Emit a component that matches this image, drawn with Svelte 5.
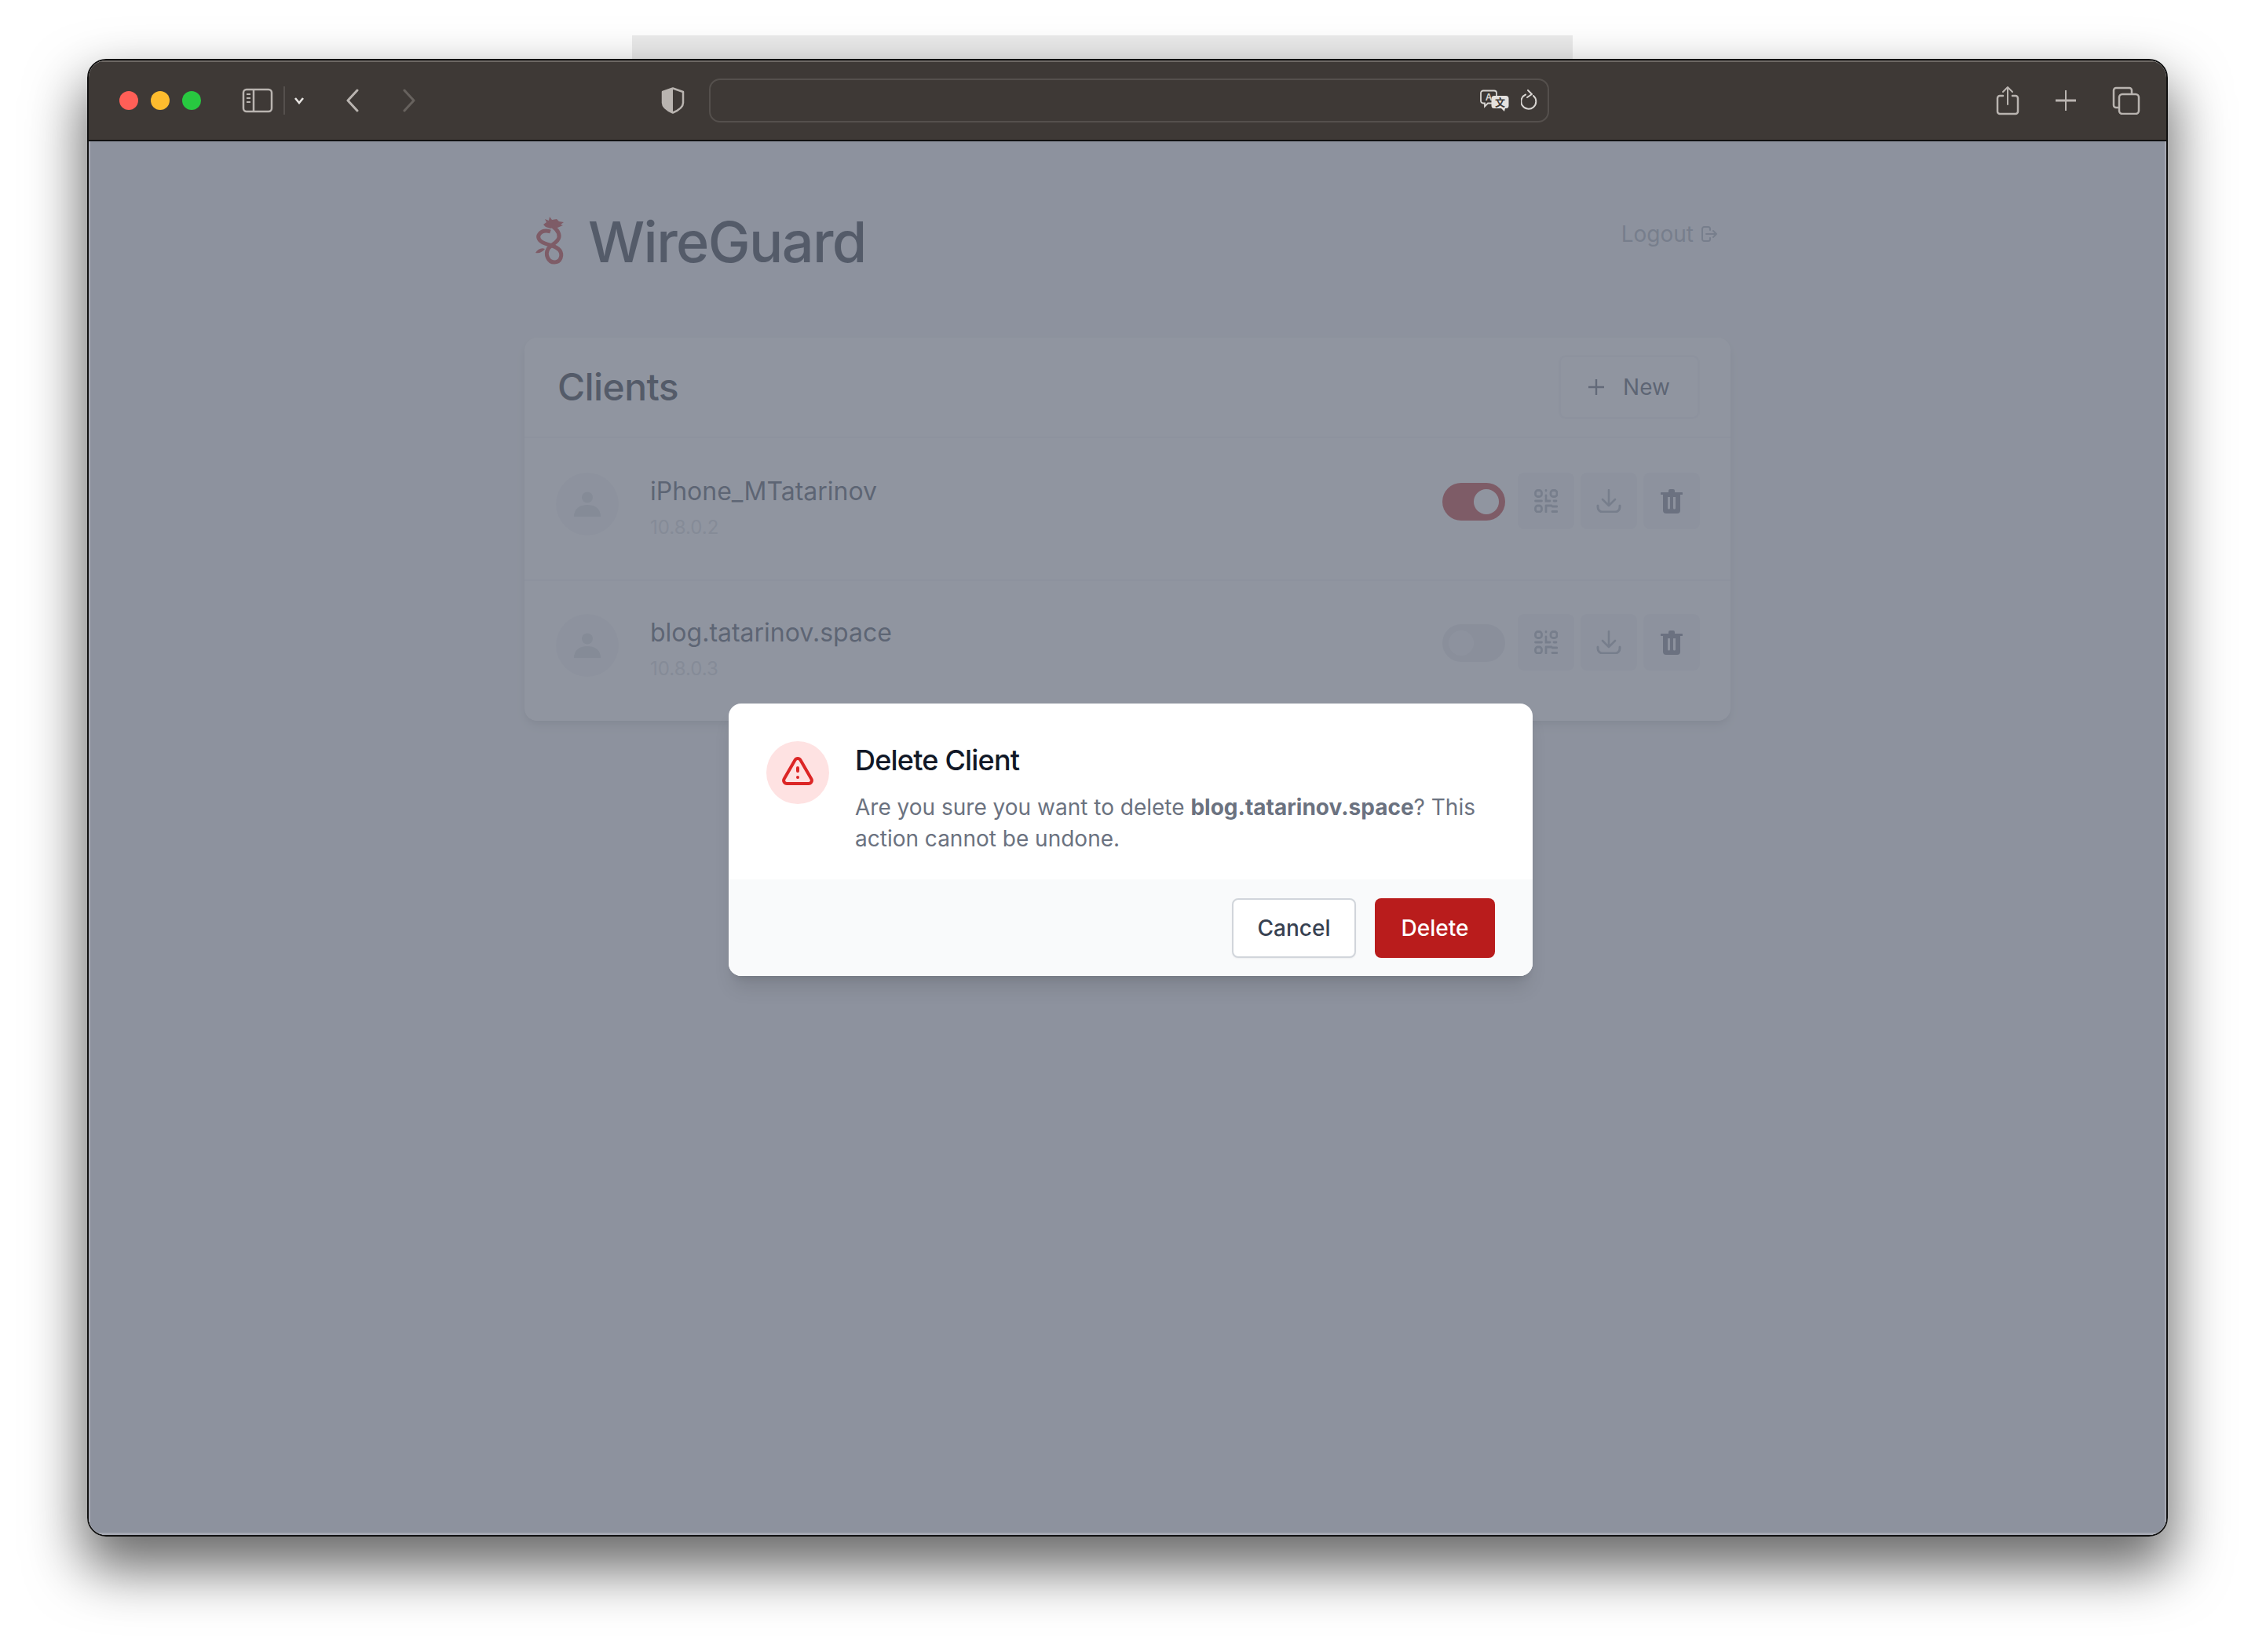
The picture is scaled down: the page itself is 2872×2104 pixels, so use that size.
<script>
  let clients = [
    { name: "iPhone_MTatarinov", ip: "10.8.0.2", enabled: true },
    { name: "blog.tatarinov.space", ip: "10.8.0.3", enabled: false }
  ];
</script>

<div class="scene">
  <div class="back-window"></div>
  <div class="window">
    <div class="toolbar">
      <span class="light red"></span>
      <span class="light yellow"></span>
      <span class="light green"></span>

      <svg class="sidebar-icon" width="40" height="32" viewBox="0 0 40 32" fill="none" stroke="#b9b4b0" stroke-width="2.5">
        <rect x="2" y="2" width="36" height="28" rx="4" />
        <path d="M15 2v28" />
        <path d="M6 8h5M6 13h5M6 18h5" stroke-width="2" />
      </svg>
      <span class="separator"></span>
      <svg class="small-chevron" width="14" height="10" viewBox="0 0 14 10" fill="none" stroke="#e8e5e2" stroke-width="2.6">
        <path d="M2 2l5 6 5-6" />
      </svg>
      <svg class="back" width="18" height="30" viewBox="0 0 18 30" fill="none" stroke="#b9b4b0" stroke-width="3" stroke-linecap="round" stroke-linejoin="round">
        <path d="M15 2L3 15l12 13" />
      </svg>
      <svg class="forward" width="18" height="30" viewBox="0 0 18 30" fill="none" stroke="#67625e" stroke-width="3" stroke-linecap="round" stroke-linejoin="round">
        <path d="M3 2l12 13L3 28" />
      </svg>
      <svg class="shield" width="30" height="34" viewBox="0 0 30 34">
        <path d="M15 1.5L28 6v14c0 6-7 10-13 12.500C9 30 2 26 2 20V6z" fill="none" stroke="#b9b4b0" stroke-width="2.500" stroke-linejoin="round" />
        <path d="M15 1.500L2 6v14c0 6 7 10 13 12.500z" fill="#b9b4b0" />
      </svg>

      <div class="address">
        <svg width="38" height="28" viewBox="0 0 38 28">
          <path d="M4 1.500h14a3 3 0 0 1 3 3v10a3 3 0 0 1-3 3h-8l-4 4v-4H4a3 3 0 0 1-3-3v-10a3 3 0 0 1 3-3z" fill="#3e3936" stroke="#d8d5d2" stroke-width="1.800" />
          <text x="11" y="14" class="glyph-a">A</text>
          <path d="M18 8h15a3.500 3.500 0 0 1 3.500 3.500v9a3.500 3.500 0 0 1-3.500 3.500h-1l-1 4-4-4h-9a3.500 3.500 0 0 1-3.500-3.500v-9A3.500 3.500 0 0 1 18 8z" fill="#e4e1de" />
          <text x="25.500" y="21" class="glyph-zh">文</text>
        </svg>
        <svg class="reload" width="22" height="28" viewBox="0 0 22 28" fill="none" stroke="#d8d5d2" stroke-width="2" stroke-linecap="round" stroke-linejoin="round">
          <path d="M6 6.500A9.500 9.500 0 1 0 16 8" />
          <path d="M9 1l5 5-6 4" />
        </svg>
      </div>

      <svg class="share" width="30" height="38" viewBox="0 0 30 38" fill="none" stroke="#b9b4b0" stroke-width="2.500" stroke-linecap="round" stroke-linejoin="round">
        <path d="M9 13H5a3 3 0 0 0-3 3v17a3 3 0 0 0 3 3h20a3 3 0 0 0 3-3V16a3 3 0 0 0-3-3h-4" />
        <path d="M15 24V2M9 8l6-6 6 6" stroke-width="2" />
      </svg>
      <svg class="plus" width="28" height="28" viewBox="0 0 28 28" fill="none" stroke="#b9b4b0">
        <path d="M14 1v26" stroke-width="2" />
        <path d="M1 14h26" stroke-width="3" />
      </svg>
      <svg class="tabs" width="36" height="36" viewBox="0 0 36 36" fill="none" stroke="#b9b4b0" stroke-width="2.500">
        <path d="M8 27H5a3 3 0 0 1-3-3V5a3 3 0 0 1 3-3h17a3 3 0 0 1 3 3v4" />
        <rect x="9" y="10" width="25" height="25" rx="4" />
      </svg>
    </div>

    <div class="page">
      <div class="container">
        <div class="header">
          <svg class="logo" width="38" height="64" viewBox="0 0 38 64" fill="none" stroke="#b91c1c" stroke-width="5">
            <path d="M17 11C25 15 32 20 31 28C30 35 21 37 17 43C13 50 17 60 25 60C33 60 36 51 32 45C28 39 20 39 13 36C5 33 3 28 6 24C9 20 14 19 20 21" />
            <path d="M11 12L15 9L13 5L18 7L19 2L22 6L28 5L31 8L37 9L33 12L36 13L29 16L24 15L20 17L14 15z" fill="#b91c1c" stroke="none" />
            <path d="M1 48C4 43 9 41 13 43C10 47 6 49 1 48z" fill="#b91c1c" stroke="none" />
          </svg>
          <h1>WireGuard</h1>
          <div class="logout">
            Logout
            <svg width="20" height="20" viewBox="0 0 20 20" fill="none" stroke="#9ca3af" stroke-width="2" stroke-linecap="round" stroke-linejoin="round">
              <path d="M11 5V3.500A2.500 2.500 0 0 0 8.500 1H3.500A2.500 2.500 0 0 0 1 3.500v13A2.500 2.500 0 0 0 3.500 19h5a2.500 2.500 0 0 0 2.500-2.500V15" />
              <path d="M6 10h13M15 6l4 4-4 4" />
            </svg>
          </div>
        </div>

        <div class="card">
          <div class="card-header">
            <h2>Clients</h2>
            <div class="new-button">
              <svg width="20" height="20" viewBox="0 0 20 20" fill="none" stroke="#4b5563" stroke-width="2.400">
                <path d="M10 0v20M0 10h20" />
              </svg>
              New
            </div>
          </div>

          {#each clients as client}
            <div class="row">
              <div class="avatar">
                <svg width="36" height="32" viewBox="0 0 36 32" fill="#d1d5db">
                  <circle cx="18" cy="7.500" r="7" />
                  <path d="M1 32C1 22 8 17 18 17s17 5 17 15z" />
                </svg>
              </div>
              <div class="info">
                <div class="name">{client.name}</div>
                <div class="ip">{client.ip}</div>
              </div>
              <div class="toggle" class:on={client.enabled}>
                <span class="knob"></span>
              </div>
              <div class="actions">
                <div class="action">
                  <svg width="30" height="30" viewBox="0 0 30 30" fill="none" stroke="#9ca3af" stroke-width="2.800" stroke-linecap="round">
                    <rect x="1.500" y="1.500" width="8" height="8" rx="3" />
                    <rect x="21" y="1.500" width="8" height="8" rx="3" />
                    <rect x="1.500" y="21" width="8" height="8" rx="3" />
                    <path d="M15 1.500v.5M15 8v2M1.500 15h8M15 12v3h5M25 15h3M15 21h7M15 21v8M23 22h6M23 28.500h6" />
                  </svg>
                </div>
                <div class="action">
                  <svg width="32" height="30" viewBox="0 0 32 30" fill="none" stroke="#9ca3af" stroke-width="2.600" stroke-linecap="round" stroke-linejoin="round">
                    <path d="M16 1v19M8 13l8 8 8-8" />
                    <path d="M2 21v2a6 6 0 0 0 6 6h16a6 6 0 0 0 6-6v-2" stroke-width="3" />
                  </svg>
                </div>
                <div class="action">
                  <svg width="28" height="32" viewBox="0 0 28 32" fill="#6b7280">
                    <path d="M10 3a2 2 0 0 1 2-2h4a2 2 0 0 1 2 2v2h9a1 1 0 0 1 0 3H1a1 1 0 0 1 0-3h9z" />
                    <path fill-rule="evenodd" d="M3 8h22v20a4 4 0 0 1-4 4H7a4 4 0 0 1-4-4zM9 11v14a1.500 1.500 0 0 0 3 0V11zM16 11v14a1.500 1.500 0 0 0 3 0V11z" />
                  </svg>
                </div>
              </div>
            </div>
          {/each}
        </div>
      </div>

      <div class="overlay">
        <div class="modal">
          <div class="modal-body">
            <div class="warning">
              <svg width="48" height="48" viewBox="0 0 24 24" fill="none" stroke="#dc2626" stroke-width="2" stroke-linecap="round" stroke-linejoin="round">
                <path d="M12 9v2m0 4h.01m-6.938 4h13.856c1.540 0 2.502-1.667 1.732-3L13.732 4c-.77-1.333-2.694-1.333-3.464 0L3.340 16c-.77 1.333.192 3 1.732 3z" />
              </svg>
            </div>
            <div class="modal-text">
              <h3>Delete Client</h3>
              <p>Are you sure you want to delete <strong>blog.tatarinov.space</strong>? This action cannot be undone.</p>
            </div>
          </div>
          <div class="modal-footer">
            <button class="cancel">Cancel</button>
            <button class="delete">Delete</button>
          </div>
        </div>
      </div>
    </div>
  </div>
</div>

<style>
  :global(body) {
    background: #fff;
    font-family: Inter, "Liberation Sans", sans-serif;
  }

  .scene {
    width: 2872px;
    height: 2104px;
    box-sizing: border-box;
    padding: 45px 111px 0;
    overflow: hidden;
  }

  .back-window {
    width: 1198px;
    height: 30px;
    margin-left: 694px;
    background: #ececec;
  }

  .window {
    height: 1882px;
    box-sizing: border-box;
    border: 2px solid #111;
    border-radius: 24px;
    overflow: hidden;
    display: flex;
    flex-direction: column;
    box-shadow: 0 36px 70px 6px rgba(0, 0, 0, 0.58);
  }

  .toolbar {
    height: 103px;
    flex: none;
    box-sizing: border-box;
    display: flex;
    align-items: center;
    background: #3e3936;
    border-bottom: 2px solid #111;
    box-shadow: inset 0 2px 0 #6d6864;
  }

  .light {
    width: 24px;
    height: 24px;
    border-radius: 50%;
    margin-right: 16px;
  }

  .red {
    background: #ff5f57;
    margin-left: 39px;
  }

  .yellow {
    background: #febc2e;
  }

  .green {
    background: #28c840;
  }

  .sidebar-icon {
    margin-left: 36px;
  }

  .separator {
    width: 2px;
    height: 36px;
    background: #55504d;
    margin-left: 13px;
  }

  .small-chevron {
    margin-left: 11px;
  }

  .back {
    margin-left: 52px;
  }

  .forward {
    margin-left: 54px;
  }

  .shield {
    margin-left: 312px;
  }

  .address {
    width: 1070px;
    height: 56px;
    box-sizing: border-box;
    margin-left: 31px;
    border: 2px solid #55504d;
    border-radius: 14px;
    display: flex;
    align-items: center;
    justify-content: flex-end;
    padding-right: 12px;
  }

  .reload {
    margin-left: 14px;
  }

  .glyph-a {
    font-family: "Liberation Sans", sans-serif;
    font-size: 12px;
    font-weight: 700;
    text-anchor: middle;
    fill: #d8d5d2;
  }

  .glyph-zh {
    font-family: "Noto Sans CJK SC", sans-serif;
    font-size: 13px;
    font-weight: 700;
    text-anchor: middle;
    fill: #3e3936;
  }

  .share {
    margin-left: 569px;
  }

  .plus {
    margin-left: 45px;
  }

  .tabs {
    margin-left: 45px;
  }

  .page {
    flex: 1;
    position: relative;
    background: #f3f4f6;
  }

  .container {
    width: 1536px;
    margin: 0 auto;
  }

  .header {
    height: 250px;
    box-sizing: border-box;
    display: flex;
    align-items: flex-start;
    padding-top: 94px;
  }

  .logo {
    margin-left: 13px;
    margin-right: 30px;
    flex: none;
  }

  h1 {
    margin: 0;
    margin-top: -6px;
    font-size: 72px;
    line-height: 80px;
    font-weight: 500;
    letter-spacing: -1.6px;
    color: #111827;
  }

  .logout {
    margin-left: auto;
    margin-right: 17px;
    margin-top: 4px;
    display: flex;
    align-items: center;
    gap: 10px;
    font-size: 28px;
    line-height: 40px;
    color: #9ca3af;
  }

  .card {
    background: #fff;
    border-radius: 16px;
    overflow: hidden;
    box-shadow: 0 4px 8px -2px rgba(0, 0, 0, 0.1), 0 8px 16px -2px rgba(0, 0, 0, 0.1);
  }

  .card-header {
    height: 128px;
    box-sizing: border-box;
    display: flex;
    align-items: center;
    justify-content: space-between;
    padding: 0 40px 0 42px;
    border-bottom: 2px solid #f3f4f6;
  }

  h2 {
    margin: 0;
    font-size: 48px;
    line-height: 64px;
    font-weight: 500;
    letter-spacing: -0.6px;
    color: #111827;
  }

  .new-button {
    width: 178px;
    height: 80px;
    box-sizing: border-box;
    display: flex;
    align-items: center;
    justify-content: center;
    gap: 24px;
    border: 2px solid #f3f4f6;
    border-radius: 8px;
    font-size: 28px;
    font-weight: 400;
    color: #374151;
    box-shadow: 0 0 0 1px #f6f6f8;
  }

  .row {
    height: 180px;
    box-sizing: border-box;
    display: flex;
    align-items: flex-start;
    padding: 44px 39px 0 40px;
  }

  .row + .row {
    border-top: 2px solid #f3f4f6;
    padding-top: 42px;
  }

  .avatar {
    width: 80px;
    height: 80px;
    flex: none;
    border-radius: 50%;
    background: #f3f4f6;
    display: flex;
    align-items: center;
    justify-content: center;
  }

  .info {
    margin-left: 40px;
    flex: 1;
  }

  .name {
    font-size: 32px;
    line-height: 48px;
    color: #374151;
  }

  .ip {
    margin-top: 6px;
    font-size: 24px;
    line-height: 32px;
    color: #d1d5db;
  }

  .toggle {
    width: 80px;
    height: 48px;
    margin-top: 13px;
    margin-right: 16px;
    box-sizing: border-box;
    padding: 8px;
    border-radius: 24px;
    background: #e5e7eb;
    display: flex;
  }

  .toggle.on {
    background: #b91c1c;
    justify-content: flex-end;
  }

  .knob {
    width: 32px;
    height: 32px;
    border-radius: 50%;
    background: #f3f4f6;
  }

  .toggle.on .knob {
    background: #fff;
  }

  .actions {
    display: flex;
    gap: 8px;
  }

  .action {
    width: 72px;
    height: 72px;
    border-radius: 8px;
    background: #f3f4f6;
    display: flex;
    align-items: center;
    justify-content: center;
  }

  .overlay {
    position: absolute;
    inset: 0;
    background: rgba(107, 114, 128, 0.75);
    display: flex;
    justify-content: center;
    align-items: flex-start;
    padding: 716px 0 0 8px;
    box-shadow: inset 2px 0 0 #a5a8b2, inset -2px 0 0 #a5a8b2, inset 0 -3px 0 #a5a8b2;
  }

  .modal {
    width: 1024px;
    border-radius: 16px;
    overflow: hidden;
    background: #fff;
    box-shadow: 0 20px 25px -5px rgba(0, 0, 0, 0.1), 0 8px 10px -6px rgba(0, 0, 0, 0.1);
  }

  .modal-body {
    height: 224px;
    box-sizing: border-box;
    display: flex;
    align-items: flex-start;
    padding: 48px 48px 0;
  }

  .warning {
    width: 80px;
    height: 80px;
    flex: none;
    border-radius: 50%;
    background: #fee2e2;
    display: flex;
    align-items: center;
    justify-content: center;
  }

  .modal-text {
    margin-left: 33px;
  }

  h3 {
    margin: 0;
    font-size: 36px;
    line-height: 48px;
    font-weight: 500;
    letter-spacing: -0.8px;
    color: #111827;
  }

  p {
    margin: 16px 0 0;
    font-size: 28px;
    line-height: 40px;
    color: #6b7280;
  }

  strong {
    font-weight: 700;
  }

  .modal-footer {
    height: 123px;
    box-sizing: border-box;
    display: flex;
    align-items: flex-start;
    justify-content: flex-end;
    gap: 24px;
    padding: 24px 48px 0;
    background: #f9fafb;
  }

  button {
    height: 76px;
    box-sizing: border-box;
    border-radius: 8px;
    font-family: inherit;
    font-size: 28px;
    font-weight: 500;
    padding: 0;
  }

  .cancel {
    width: 158px;
    background: #fff;
    border: 2px solid #d1d5db;
    color: #374151;
    box-shadow: 0 1px 2px rgba(0, 0, 0, 0.05);
  }

  .delete {
    width: 153px;
    background: #b91c1c;
    border: none;
    color: #fff;
  }
</style>
